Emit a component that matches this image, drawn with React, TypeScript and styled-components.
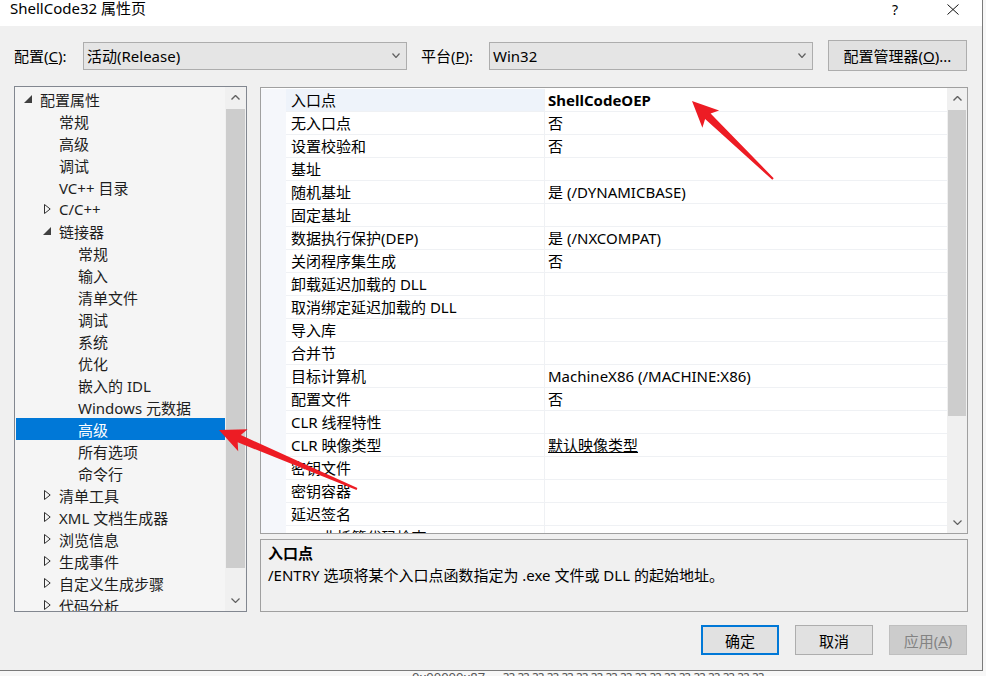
import React from "react";
import styled, { createGlobalStyle, css } from "styled-components";

const GlobalStyle = createGlobalStyle`
  html, body { margin: 0; padding: 0; background: #ffffff; }
  #root { width: 986px; height: 676px; overflow: hidden; }
  * { box-sizing: border-box; }
`;

const FONT = `"Noto Sans", "Noto Sans CJK SC", sans-serif`;

const Page = styled.div`
  position: relative;
  width: 986px;
  height: 676px;
  overflow: hidden;
  background: #f7f7f7;
  font-family: ${FONT};
  font-size: 15px;
  color: #000;
  display: flex;
  flex-direction: column;
`;

const Window = styled.div`
  width: 983px;
  height: 671px;
  flex: none;
  background: #f0f0f0;
  border-right: 1px solid #7a7a7a;
  border-bottom: 1px solid #7a7a7a;
  display: flex;
  flex-direction: column;
`;

const TitleBar = styled.div`
  height: 26px;
  flex: none;
  background: #ffffff;
  display: flex;
  align-items: flex-start;
  padding-left: 10px;
  line-height: 17px;
`;

const TitleText = styled.div`
  font-size: 15px;
`;

const TitleButtons = styled.div`
  margin-left: auto;
  display: flex;
`;

const TitleBtn = styled.div`
  width: 58px;
  height: 18px;
  display: flex;
  align-items: center;
  justify-content: center;
  font-size: 14px;
`;

const Content = styled.div`
  flex: 1;
  display: flex;
  flex-direction: column;
  padding: 14px 14px 0 14px;
`;

const Toolbar = styled.div`
  display: flex;
  align-items: center;
  height: 31px;
`;

const Label = styled.div<{ $w: number; $ml?: number }>`
  width: ${(p) => p.$w}px;
  margin-left: ${(p) => p.$ml ?? 0}px;
  flex: none;
  font-size: 15px;
  white-space: nowrap;
`;

const Combo = styled.div`
  width: 324px;
  height: 28px;
  flex: none;
  border: 1px solid #adadad;
  background: #e5e5e5;
  display: flex;
  align-items: center;
  padding: 0 6px 0 3px;
  font-size: 15px;
  span { flex: 1; white-space: nowrap; }
`;

const ToolButton = styled.div`
  width: 139px;
  height: 31px;
  margin-left: 15px;
  flex: none;
  border: 1px solid #adadad;
  background: #e1e1e1;
  display: flex;
  align-items: center;
  justify-content: center;
  font-size: 15px;
`;

const U = styled.span`
  text-decoration: underline;
`;

const Main = styled.div`
  display: flex;
  gap: 13px;
  margin-top: 15px;
  height: 526px;
`;

const Tree = styled.div`
  width: 233px;
  height: 526px;
  flex: none;
  border: 1px solid #828790;
  background: #f5f5f5;
  display: flex;
`;

const TreeList = styled.div`
  flex: 1;
  padding: 1px 0 0 1px;
  overflow: hidden;
`;

const TreeRow = styled.div<{ $level: number; $selected?: boolean }>`
  height: 22px;
  display: flex;
  align-items: center;
  padding-left: ${(p) => 7 + p.$level * 19}px;
  white-space: nowrap;
  color: #1e1e1e;
  ${(p) =>
    p.$selected &&
    css`
      background: #0078d7;
      color: #ffffff;
    `}
`;

const Toggle = styled.div<{ $open?: boolean }>`
  width: 17px;
  flex: none;
  display: flex;
  align-items: center;
  padding-left: ${(p) => (p.$open ? 1 : 2)}px;
`;

const VScroll = styled.div<{ $w: number }>`
  width: ${(p) => p.$w}px;
  flex: none;
  background: #f0f0f0;
  display: flex;
  flex-direction: column;
`;

const ScrollArrow = styled.div`
  height: 21px;
  flex: none;
  display: flex;
  align-items: center;
  justify-content: center;
`;

const ScrollTrack = styled.div`
  flex: 1;
  padding: 1px 1px 0 1px;
`;

const Thumb = styled.div<{ $h: number }>`
  height: ${(p) => p.$h}px;
  background: #cdcdcd;
`;

const RightCol = styled.div`
  flex: 1;
  display: flex;
  flex-direction: column;
  gap: 5px;
`;

const Grid = styled.div`
  height: 447px;
  margin-top: 1px;
  flex: none;
  border: 1px solid #a0a0a0;
  background: #ffffff;
  display: flex;
`;

const GridBody = styled.div`
  flex: 1;
  overflow: hidden;
  display: flex;
  flex-direction: column;
  padding-top: 1px;
`;

const GridRow = styled.div`
  display: grid;
  grid-template-columns: 25px 259px 1fr;
  height: 23px;
  flex: none;
`;

const Gutter = styled.div`
  background: #f5f7fb;
`;

const NameCell = styled.div<{ $selected?: boolean }>`
  border-bottom: 1px solid #eff1f4;
  border-right: 1px solid #eff1f4;
  padding-left: 5px;
  line-height: 22px;
  white-space: nowrap;
  background: ${(p) => (p.$selected ? "#eef3fa" : "#ffffff")};
`;

const ValueCell = styled.div<{ $bold?: boolean; $link?: boolean }>`
  border-bottom: 1px solid #eff1f4;
  padding-left: 3px;
  line-height: 22px;
  white-space: nowrap;
  font-weight: ${(p) => (p.$bold ? 700 : 400)};
  text-decoration: ${(p) => (p.$link ? "underline" : "none")};
`;

const Desc = styled.div`
  height: 73px;
  flex: none;
  border: 1px solid #a0a0a0;
  background: #f0f0f0;
  padding: 2px 7px;
  line-height: 22px;
`;

const DescTitle = styled.div`
  font-weight: 700;
`;

const ButtonRow = styled.div`
  display: flex;
  justify-content: flex-end;
  gap: 16px;
  margin-top: 13px;
  padding-right: 1px;
`;

const DlgButton = styled.div<{ $variant?: "primary" | "disabled" }>`
  width: 78px;
  height: 30px;
  display: flex;
  align-items: center;
  justify-content: center;
  background: #e1e1e1;
  border: 1px solid #adadad;
  font-size: 15px;
  ${(p) =>
    p.$variant === "primary" &&
    css`
      border: 2px solid #0078d7;
    `}
  ${(p) =>
    p.$variant === "disabled" &&
    css`
      background: #cccccc;
      border-color: #bfbfbf;
      color: #838383;
    `}
`;

const BackStrip = styled.div`
  flex: 1;
  overflow: hidden;
  display: flex;
  align-items: flex-start;
  padding-left: 412px;
  gap: 18px;
  font-size: 13px;
  line-height: 13px;
  color: #555;
  white-space: nowrap;
`;

const Overlay = styled.svg`
  position: absolute;
  left: 0;
  top: 0;
  pointer-events: none;
`;

const ChevronDown = ({ w = 8, h = 5, color = "#606060" }: { w?: number; h?: number; color?: string }) => (
  <svg width={w} height={h} viewBox={`0 0 ${w} ${h}`}>
    <polyline points={`0.5,0.5 ${w / 2},${h - 0.5} ${w - 0.5},0.5`} fill="none" stroke={color} strokeWidth="1.2" />
  </svg>
);

const ChevronUp = ({ w = 9, h = 5, color = "#606060" }: { w?: number; h?: number; color?: string }) => (
  <svg width={w} height={h} viewBox={`0 0 ${w} ${h}`}>
    <polyline points={`0.5,${h - 0.5} ${w / 2},0.5 ${w - 0.5},${h - 0.5}`} fill="none" stroke={color} strokeWidth="1.4" />
  </svg>
);

const OpenTri = ({ color }: { color: string }) => (
  <svg width="8" height="8" viewBox="0 0 8 8">
    <polygon points="8,0 8,8 0,8" fill={color} />
  </svg>
);

const ClosedTri = ({ color }: { color: string }) => (
  <svg width="7" height="10" viewBox="0 0 7 10">
    <polygon points="0.5,0.5 6.2,5 0.5,9.5" fill="none" stroke={color} strokeWidth="1" />
  </svg>
);

type TreeItem = { label: string; level: number; toggle?: "open" | "closed"; selected?: boolean };

const treeItems: TreeItem[] = [
  { label: "配置属性", level: 0, toggle: "open" },
  { label: "常规", level: 1 },
  { label: "高级", level: 1 },
  { label: "调试", level: 1 },
  { label: "VC++ 目录", level: 1 },
  { label: "C/C++", level: 1, toggle: "closed" },
  { label: "链接器", level: 1, toggle: "open" },
  { label: "常规", level: 2 },
  { label: "输入", level: 2 },
  { label: "清单文件", level: 2 },
  { label: "调试", level: 2 },
  { label: "系统", level: 2 },
  { label: "优化", level: 2 },
  { label: "嵌入的 IDL", level: 2 },
  { label: "Windows 元数据", level: 2 },
  { label: "高级", level: 2, selected: true },
  { label: "所有选项", level: 2 },
  { label: "命令行", level: 2 },
  { label: "清单工具", level: 1, toggle: "closed" },
  { label: "XML 文档生成器", level: 1, toggle: "closed" },
  { label: "浏览信息", level: 1, toggle: "closed" },
  { label: "生成事件", level: 1, toggle: "closed" },
  { label: "自定义生成步骤", level: 1, toggle: "closed" },
  { label: "代码分析", level: 1, toggle: "closed" },
];

const props: [string, string][] = [
  ["入口点", "ShellCodeOEP"],
  ["无入口点", "否"],
  ["设置校验和", "否"],
  ["基址", ""],
  ["随机基址", "是 (/DYNAMICBASE)"],
  ["固定基址", ""],
  ["数据执行保护(DEP)", "是 (/NXCOMPAT)"],
  ["关闭程序集生成", "否"],
  ["卸载延迟加载的 DLL", ""],
  ["取消绑定延迟加载的 DLL", ""],
  ["导入库", ""],
  ["合并节", ""],
  ["目标计算机", "MachineX86 (/MACHINE:X86)"],
  ["配置文件", "否"],
  ["CLR 线程特性", ""],
  ["CLR 映像类型", "默认映像类型"],
  ["密钥文件", ""],
  ["密钥容器", ""],
  ["延迟签名", ""],
  ["CLR 非托管代码检查", ""],
];

function arrowPoints(
  tail: [number, number],
  tip: [number, number],
  headLen: number,
  headHalf: number,
  neckHalf: number,
  tailHalf: number
) {
  const dx = tip[0] - tail[0];
  const dy = tip[1] - tail[1];
  const L = Math.hypot(dx, dy);
  const ux = dx / L;
  const uy = dy / L;
  const nx = -uy;
  const ny = ux;
  const nk: [number, number] = [tip[0] - ux * headLen, tip[1] - uy * headLen];
  const barb: [number, number] = [tip[0] - ux * (headLen + 4), tip[1] - uy * (headLen + 4)];
  const pts: [number, number][] = [
    [tail[0] + nx * tailHalf, tail[1] + ny * tailHalf],
    [nk[0] + nx * neckHalf, nk[1] + ny * neckHalf],
    [barb[0] + nx * headHalf, barb[1] + ny * headHalf],
    tip,
    [barb[0] - nx * headHalf, barb[1] - ny * headHalf],
    [nk[0] - nx * neckHalf, nk[1] - ny * neckHalf],
    [tail[0] - nx * tailHalf, tail[1] - ny * tailHalf],
  ];
  return pts.map((p) => `${p[0].toFixed(1)},${p[1].toFixed(1)}`).join(" ");
}

export default function App() {
  return (
    <>
      <GlobalStyle />
      <Page>
        <Window>
          <TitleBar>
            <TitleText>ShellCode32 属性页</TitleText>
            <TitleButtons>
              <TitleBtn>?</TitleBtn>
              <TitleBtn>
                <svg width="12" height="11" viewBox="0 0 12 11">
                  <line x1="0.5" y1="0.5" x2="11.5" y2="10.5" stroke="#111" strokeWidth="1" />
                  <line x1="11.5" y1="0.5" x2="0.5" y2="10.5" stroke="#111" strokeWidth="1" />
                </svg>
              </TitleBtn>
            </TitleButtons>
          </TitleBar>
          <Content>
            <Toolbar>
              <Label $w={69}>
                配置(<U>C</U>):
              </Label>
              <Combo>
                <span>活动(Release)</span>
                <ChevronDown w={8} h={5} color="#606060" />
              </Combo>
              <Label $w={68} $ml={14}>
                平台(<U>P</U>):
              </Label>
              <Combo>
                <span>Win32</span>
                <ChevronDown w={8} h={5} color="#606060" />
              </Combo>
              <ToolButton>
                配置管理器(<U>O</U>)...
              </ToolButton>
            </Toolbar>
            <Main>
              <Tree>
                <TreeList>
                  {treeItems.map((it, i) => (
                    <TreeRow key={i} $level={it.level} $selected={it.selected}>
                      <Toggle $open={it.toggle === "open"}>
                        {it.toggle === "open" && <OpenTri color={it.selected ? "#fff" : "#404040"} />}
                        {it.toggle === "closed" && <ClosedTri color={it.selected ? "#fff" : "#303030"} />}
                      </Toggle>
                      {it.label}
                    </TreeRow>
                  ))}
                </TreeList>
                <VScroll $w={21}>
                  <ScrollArrow>
                    <ChevronUp />
                  </ScrollArrow>
                  <ScrollTrack>
                    <Thumb $h={459} />
                  </ScrollTrack>
                  <ScrollArrow>
                    <ChevronDown w={9} h={5} />
                  </ScrollArrow>
                </VScroll>
              </Tree>
              <RightCol>
                <Grid>
                  <GridBody>
                    {props.map(([name, value], i) => (
                      <GridRow key={i}>
                        <Gutter />
                        <NameCell $selected={i === 0}>{name}</NameCell>
                        <ValueCell $bold={i === 0} $link={i === 15}>
                          {value}
                        </ValueCell>
                      </GridRow>
                    ))}
                  </GridBody>
                  <VScroll $w={20}>
                    <ScrollArrow>
                      <ChevronUp />
                    </ScrollArrow>
                    <ScrollTrack>
                      <Thumb $h={306} />
                    </ScrollTrack>
                    <ScrollArrow>
                      <ChevronDown w={9} h={5} />
                    </ScrollArrow>
                  </VScroll>
                </Grid>
                <Desc>
                  <DescTitle>入口点</DescTitle>
                  <div>/ENTRY 选项将某个入口点函数指定为 .exe 文件或 DLL 的起始地址。</div>
                </Desc>
              </RightCol>
            </Main>
            <ButtonRow>
              <DlgButton $variant="primary">确定</DlgButton>
              <DlgButton>取消</DlgButton>
              <DlgButton $variant="disabled">
                应用(<U>A</U>)
              </DlgButton>
            </ButtonRow>
          </Content>
        </Window>
        <BackStrip>
          <span>0x00000x87</span>
          <span>?? ?? ?? ?? ?? ?? ?? ?? ?? ?? ?? ?? ?? ?? ?? ?? ?? ??</span>
        </BackStrip>
        <Overlay width="986" height="676" viewBox="0 0 986 676">
          <polygon points={arrowPoints([773, 179], [692, 101], 22, 12, 4, 1)} fill="#ed1c24" />
          <polygon points={arrowPoints([357, 489], [219, 430], 22, 12, 4, 1)} fill="#ed1c24" />
        </Overlay>
      </Page>
    </>
  );
}
